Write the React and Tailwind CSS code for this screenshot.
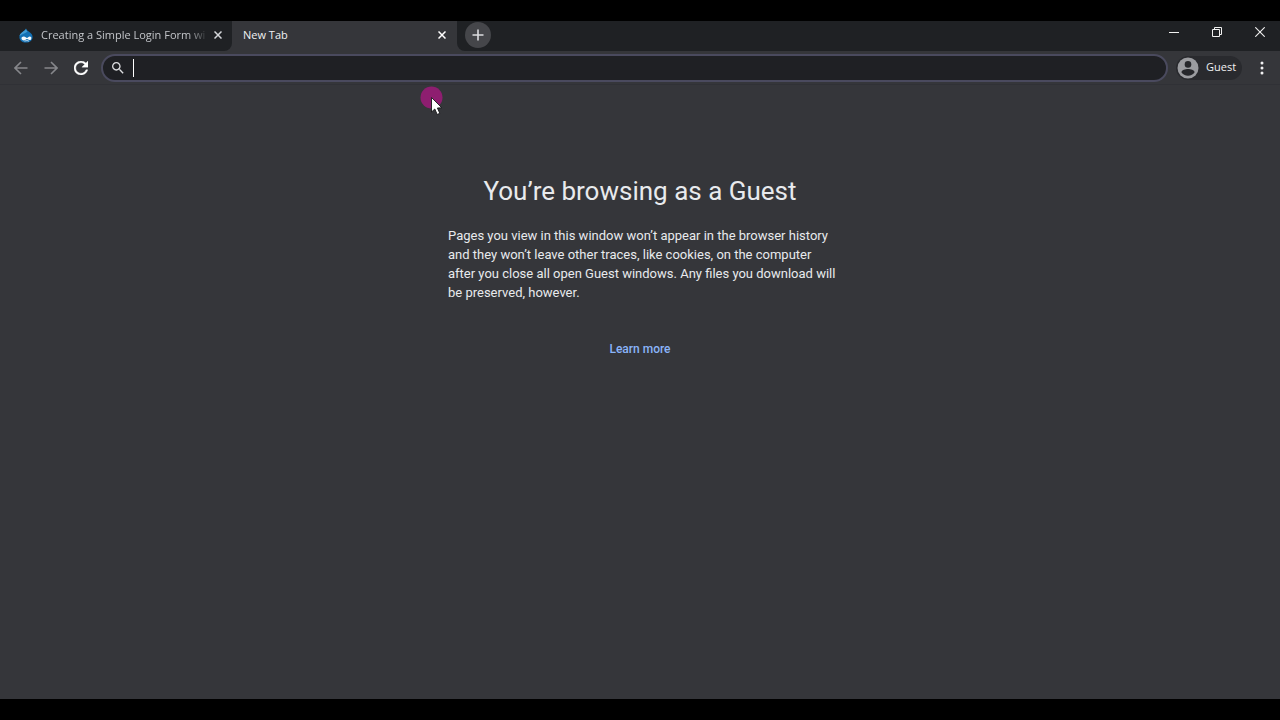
import React from "react";

function CloseIcon({ className }) {
  return (
    <svg viewBox="0 0 8 8" className={className} fill="none" stroke="currentColor" strokeWidth="1.5" aria-hidden="true">
      <path d="M0.5 0.5 L7.5 7.5 M7.5 0.5 L0.5 7.5" />
    </svg>
  );
}

function DropIcon() {
  return (
    <svg viewBox="0 0 14 15" className="h-[15px] w-3.5 shrink-0" aria-hidden="true">
      <path d="M7 0.5 C7.6 2.6 9.4 3 11 4.4 C12.6 5.6 13.6 7.1 13.6 9 C13.6 12.3 10.8 14.6 7 14.6 C3.2 14.6 0.4 12.3 0.4 9 C0.4 6.5 2 5 4.2 3.5 C5.6 2.6 6.6 1.9 7 0.5Z" fill="#1270b4" />
      <path d="M7 0.5 C6.6 1.9 5.6 2.6 4.2 3.5 C2.4 4.7 1 6 0.6 8 C2.6 6 6.5 5.6 8.5 3.6 C7.6 2.8 7.2 1.8 7 0.5Z" fill="#3f9bd4" />
      <path d="M4.8 8.6 C6.4 8.6 7.2 10 8 10 C8.8 10 9.4 8.6 10.8 8.6 C12 8.6 12.5 9.3 12.3 10.4 C12.1 11.6 11.4 12.2 10.4 12 C9.4 11.8 9 11 8 11 C7 11 6.4 12.4 4.8 12.4 C3.4 12.4 2.5 11.6 2.5 10.5 C2.5 9.3 3.4 8.6 4.8 8.6Z" fill="#f4f8fb" />
      <path d="M5.6 13.2 C6.8 12.5 8.6 12.5 9.8 13.1" stroke="#f4f8fb" strokeWidth="0.9" fill="none" />
    </svg>
  );
}

function TabStrip() {
  return (
    <header className="flex h-[30px] items-center bg-[#35363a] text-[11px] text-[#c3c5c9]">
      <div role="tablist" className="flex h-full">
        <div className="flex h-full w-58 items-center rounded-br-lg bg-[#1f2124] pr-1.5 pb-0.5 pl-[19px]">
          <DropIcon />
          <button role="tab" aria-selected="false" className="ml-2 h-full min-w-0 flex-1 text-left whitespace-nowrap [mask-image:linear-gradient(to_right,black_88%,transparent)]">
            Creating a Simple Login Form wi
          </button>
          <button aria-label="Close tab" className="ml-0.5 flex size-4 items-center justify-center text-[#d5d7da]">
            <CloseIcon className="size-2" />
          </button>
        </div>
        <div className="flex h-full w-[225px] items-center bg-[#35363a] pr-[7px] pb-0.5 pl-[11px] text-[#f0f1f2]">
          <button role="tab" aria-selected="true" className="h-full flex-1 text-left">
            New Tab
          </button>
          <button aria-label="Close tab" className="flex size-4 items-center justify-center text-white">
            <CloseIcon className="size-2" />
          </button>
        </div>
      </div>
      <div className="flex h-full flex-1 items-center rounded-bl-lg bg-[#1f2124] pb-0.5 pl-2">
        <button aria-label="New tab" className="flex size-[26px] items-center justify-center rounded-full bg-[#45464a] text-[#dcdde0]">
          <svg viewBox="0 0 12 12" className="size-3" fill="none" stroke="currentColor" strokeWidth="1.6" aria-hidden="true">
            <path d="M6 0.5 V11.5 M0.5 6 H11.5" />
          </svg>
        </button>
        <div className="ml-auto flex gap-[3px] self-start text-[#f1f1f1]">
          <button aria-label="Minimize" className="flex h-[22px] w-10 items-center justify-center">
            <svg viewBox="0 0 10 10" className="size-2.5" aria-hidden="true">
              <path d="M0 5 H10 V6 H0Z" fill="currentColor" />
            </svg>
          </button>
          <button aria-label="Restore" className="flex h-[22px] w-10 items-center justify-center">
            <svg viewBox="0 0 10 10" className="size-2.5" fill="none" stroke="currentColor" aria-hidden="true">
              <path d="M0.5 2.5 H7.5 V9.5 H0.5Z M2.5 2.5 V0.5 H9.5 V7.5 H7.5" />
            </svg>
          </button>
          <button aria-label="Close window" className="flex h-[22px] w-10 items-center justify-center">
            <svg viewBox="0 0 10 10" className="size-2.5" fill="none" stroke="currentColor" strokeWidth="1.1" aria-hidden="true">
              <path d="M0.3 0.3 L9.7 9.7 M9.7 0.3 L0.3 9.7" />
            </svg>
          </button>
        </div>
      </div>
    </header>
  );
}

function ArrowIcon({ d }) {
  return (
    <svg viewBox="0 0 14 14" className="size-3.5" fill="none" stroke="currentColor" strokeWidth="1.6" aria-hidden="true">
      <path d={d} />
    </svg>
  );
}

function Toolbar() {
  return (
    <div className="flex h-[34px] items-center gap-2 border-b border-[#303136] bg-[#35363a] pr-1.5 pl-1.5">
      <nav aria-label="History" className="-mr-[3px] flex text-[#86878b]">
        <button aria-label="Back" className="flex size-[30px] items-center justify-center">
          <ArrowIcon d="M13.5 7 H1.5 M7 1 L1 7 L7 13" />
        </button>
        <button aria-label="Forward" className="flex size-[30px] items-center justify-center">
          <ArrowIcon d="M0.5 7 H12.5 M7 1 L13 7 L7 13" />
        </button>
        <button aria-label="Reload" className="flex size-[30px] items-center justify-center text-white">
          <svg viewBox="4 4 16 16" className="size-3.5" fill="currentColor" stroke="currentColor" strokeWidth="0.4" aria-hidden="true">
            <path d="M17.65 6.35C16.2 4.9 14.21 4 12 4c-4.42 0-7.99 3.58-7.99 8s3.57 8 7.99 8c3.73 0 6.84-2.55 7.73-6h-2.08c-.82 2.33-3.04 4-5.65 4-3.31 0-6-2.69-6-6s2.69-6 6-6c1.66 0 3.14.69 4.22 1.78L13 11h7V4l-2.35 2.35z" />
          </svg>
        </button>
      </nav>
      <div className="flex h-7 flex-1 items-center rounded-full border-2 border-[#4a4a5e] bg-[#1f2024] pr-3 pl-[9px]">
        <svg viewBox="3 3 18 18" className="size-3 shrink-0 text-[#dcdde0]" fill="currentColor" aria-hidden="true">
          <path d="M15.5 14h-.79l-.28-.27C15.41 12.59 16 11.11 16 9.5 16 5.91 13.09 3 9.5 3S3 5.91 3 9.5 5.91 16 9.5 16c1.61 0 3.09-.59 4.23-1.57l.27.28v.79l5 4.99L20.49 19l-4.99-5zm-6 0C7.01 14 5 11.99 5 9.5S7.01 5 9.5 5 14 7.01 14 9.5 11.99 14 9.5 14z" />
        </svg>
        <span className="ml-[9px] h-[18px] w-px bg-white" />
        <input type="text" aria-label="Search or enter address" className="min-w-0 flex-1 bg-transparent text-xs text-white caret-transparent outline-none" />
      </div>
      <button className="flex h-6 w-[66px] items-center gap-[7px] rounded-full bg-[#292a2e] pl-px text-[11px] text-[#f1f1f2]">
        <svg viewBox="0 0 22 22" className="size-[22px] shrink-0" aria-hidden="true">
          <circle cx="11" cy="11" r="10.5" fill="#9b9ca0" />
          <circle cx="11" cy="7.4" r="3.3" fill="#26272b" />
          <path d="M4.4 15.2 C4.6 12.8 8.4 11.9 11 11.9 C13.6 11.9 17.4 12.8 17.6 15.2 C16.2 17.4 13.8 18.8 11 18.8 C8.2 18.8 5.8 17.4 4.4 15.2Z" fill="#26272b" />
        </svg>
        Guest
      </button>
      <button aria-label="Menu" className="flex size-6 items-center justify-center text-[#f1f1f2]">
        <svg viewBox="0 0 4 14" className="h-3.5 w-1" fill="currentColor" aria-hidden="true">
          <circle cx="2" cy="2" r="1.5" />
          <circle cx="2" cy="7" r="1.5" />
          <circle cx="2" cy="12" r="1.5" />
        </svg>
      </button>
    </div>
  );
}

function Pointer() {
  return (
    <svg viewBox="0 0 26 30" className="pointer-events-none absolute top-[86px] left-[419px] h-[30px] w-[26px]" aria-hidden="true">
      <circle cx="12.5" cy="11.5" r="11" fill="#8e1e70" />
      <path d="M12.5 11.5 V26 L15.8 23 L18.2 28.5 L20.8 27.3 L18.4 22 L22.8 21.8Z" fill="#fff" stroke="#17171a" strokeWidth="0.9" />
    </svg>
  );
}

export default function App() {
  return (
    <div className="relative flex min-h-screen flex-col bg-black py-[21px] font-['Open_Sans','Noto_Sans',sans-serif]">
      <TabStrip />
      <Toolbar />
      <main className="flex flex-1 flex-col items-center bg-[#35363a] px-6 pt-[90px] font-[Roboto,sans-serif] text-[#e8eaed]">
        <h1 className="text-[26px] leading-8">You’re browsing as a Guest</h1>
        <p className="mt-[19px] w-full max-w-[396px] pl-1.5 text-[13px] leading-[19px]">
          Pages you view in this window won’t appear in the browser history and they won’t leave other traces, like cookies, on the computer after you close all open Guest windows. Any files you download will be preserved, however.
        </p>
        <a href="#" className="mt-[37px] text-xs leading-5 font-medium text-[#8ab4f8]">
          Learn more
        </a>
      </main>
      <Pointer />
    </div>
  );
}
